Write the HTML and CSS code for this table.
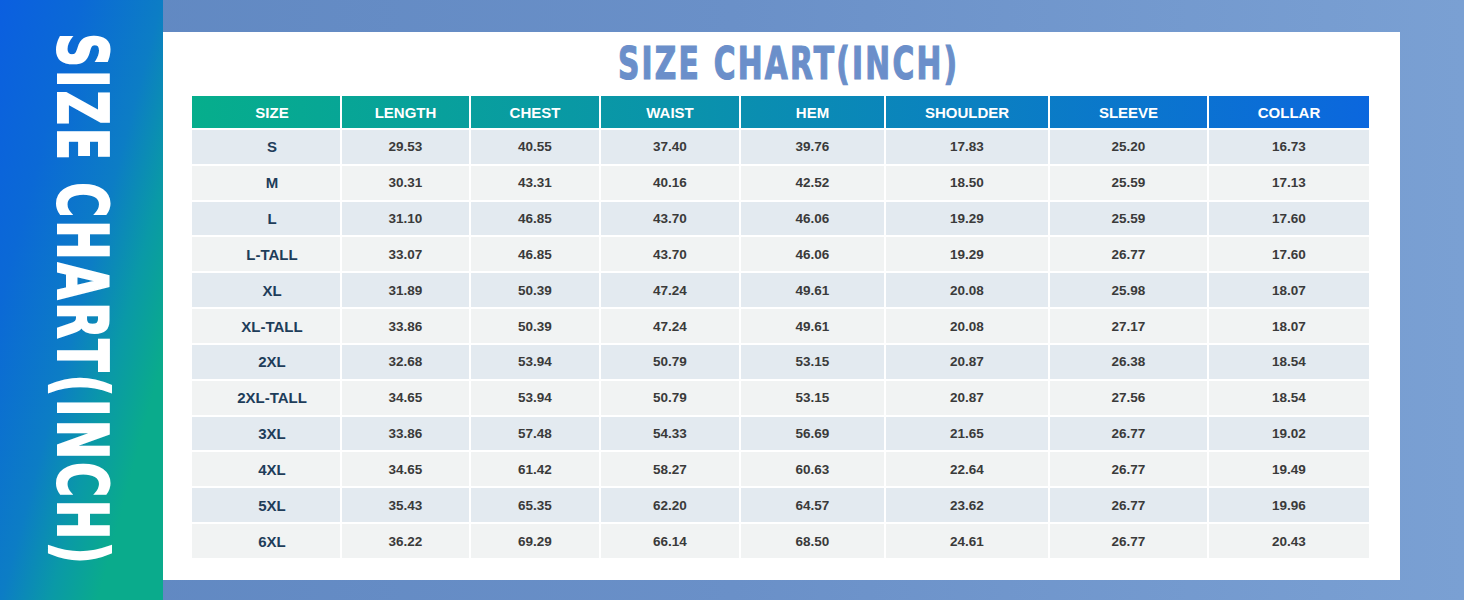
FILE: index.html
```html
<!DOCTYPE html>
<html lang="en">
<head>
<meta charset="utf-8">
<title>Size Chart (Inch)</title>
<link rel="stylesheet" href="styles.css">
</head>
<body>
<aside class="side">
  <span class="side-title">SIZE CHART(INCH)</span>
</aside>
<main class="stage">
  <section class="card">
    <h1 class="title"><span class="title-text">SIZE CHART(INCH)</span></h1>
    <div class="chart">
      <div class="row head">
        <div class="th label">SIZE</div><div class="th">LENGTH</div><div class="th">CHEST</div><div class="th">WAIST</div><div class="th">HEM</div><div class="th">SHOULDER</div><div class="th">SLEEVE</div><div class="th">COLLAR</div>
      </div>
      <div class="row odd">
        <div class="cell label">S</div><div class="cell">29.53</div><div class="cell">40.55</div><div class="cell">37.40</div><div class="cell">39.76</div><div class="cell">17.83</div><div class="cell">25.20</div><div class="cell">16.73</div>
      </div>
      <div class="row even">
        <div class="cell label">M</div><div class="cell">30.31</div><div class="cell">43.31</div><div class="cell">40.16</div><div class="cell">42.52</div><div class="cell">18.50</div><div class="cell">25.59</div><div class="cell">17.13</div>
      </div>
      <div class="row odd">
        <div class="cell label">L</div><div class="cell">31.10</div><div class="cell">46.85</div><div class="cell">43.70</div><div class="cell">46.06</div><div class="cell">19.29</div><div class="cell">25.59</div><div class="cell">17.60</div>
      </div>
      <div class="row even">
        <div class="cell label">L-TALL</div><div class="cell">33.07</div><div class="cell">46.85</div><div class="cell">43.70</div><div class="cell">46.06</div><div class="cell">19.29</div><div class="cell">26.77</div><div class="cell">17.60</div>
      </div>
      <div class="row odd">
        <div class="cell label">XL</div><div class="cell">31.89</div><div class="cell">50.39</div><div class="cell">47.24</div><div class="cell">49.61</div><div class="cell">20.08</div><div class="cell">25.98</div><div class="cell">18.07</div>
      </div>
      <div class="row even">
        <div class="cell label">XL-TALL</div><div class="cell">33.86</div><div class="cell">50.39</div><div class="cell">47.24</div><div class="cell">49.61</div><div class="cell">20.08</div><div class="cell">27.17</div><div class="cell">18.07</div>
      </div>
      <div class="row odd">
        <div class="cell label">2XL</div><div class="cell">32.68</div><div class="cell">53.94</div><div class="cell">50.79</div><div class="cell">53.15</div><div class="cell">20.87</div><div class="cell">26.38</div><div class="cell">18.54</div>
      </div>
      <div class="row even">
        <div class="cell label">2XL-TALL</div><div class="cell">34.65</div><div class="cell">53.94</div><div class="cell">50.79</div><div class="cell">53.15</div><div class="cell">20.87</div><div class="cell">27.56</div><div class="cell">18.54</div>
      </div>
      <div class="row odd">
        <div class="cell label">3XL</div><div class="cell">33.86</div><div class="cell">57.48</div><div class="cell">54.33</div><div class="cell">56.69</div><div class="cell">21.65</div><div class="cell">26.77</div><div class="cell">19.02</div>
      </div>
      <div class="row even">
        <div class="cell label">4XL</div><div class="cell">34.65</div><div class="cell">61.42</div><div class="cell">58.27</div><div class="cell">60.63</div><div class="cell">22.64</div><div class="cell">26.77</div><div class="cell">19.49</div>
      </div>
      <div class="row odd">
        <div class="cell label">5XL</div><div class="cell">35.43</div><div class="cell">65.35</div><div class="cell">62.20</div><div class="cell">64.57</div><div class="cell">23.62</div><div class="cell">26.77</div><div class="cell">19.96</div>
      </div>
      <div class="row even">
        <div class="cell label">6XL</div><div class="cell">36.22</div><div class="cell">69.29</div><div class="cell">66.14</div><div class="cell">68.50</div><div class="cell">24.61</div><div class="cell">26.77</div><div class="cell">20.43</div>
      </div>
    </div>
  </section>
</main>
</body>
</html>
```

FILE: styles.css
```css
* { box-sizing: border-box; }

html, body {
  margin: 0;
  padding: 0;
}

body {
  width: 1464px;
  height: 600px;
  overflow: hidden;
  display: flex;
  font-family: "Liberation Sans", Arial, sans-serif;
  background: linear-gradient(90deg, #5f87c1 0%, #6a90c8 50%, #7aa0d3 100%);
}

.side {
  width: 163px;
  flex: none;
  height: 600px;
  display: flex;
  align-items: center;
  justify-content: center;
  background: linear-gradient(105deg, #0b5fe0 0%, #0b69d6 25%, #0c7dc5 50%, #0a99a7 65%, #0aab8c 80%, #0aab8c 100%);
}

.side-title {
  writing-mode: vertical-rl;
  font-family: "DejaVu Sans Condensed", "DejaVu Sans", sans-serif;
  font-stretch: condensed;
  font-weight: 700;
  font-size: 70px;
  line-height: 1;
  letter-spacing: 4px;
  color: #ffffff;
  -webkit-text-stroke: 2px #ffffff;
  transform: scaleY(0.75);
  white-space: nowrap;
}

.stage {
  flex: 1;
  padding: 32px 64px 20px 0;
  display: flex;
}

.card {
  flex: 1;
  background: #ffffff;
  padding: 0 31px 0 29px;
  display: flex;
  flex-direction: column;
}

.title {
  margin: 0;
  height: 64px;
  padding-left: 16px;
  display: flex;
  align-items: center;
  justify-content: center;
}

.title-text {
  display: inline-block;
  font-family: "DejaVu Sans Condensed", "DejaVu Sans", sans-serif;
  font-stretch: condensed;
  font-weight: 700;
  font-size: 44px;
  line-height: 1;
  letter-spacing: 3px;
  color: #6b8fca;
  -webkit-text-stroke: 1.2px #6b8fca;
  transform: scaleX(0.75);
  white-space: nowrap;
}

.chart {
  display: grid;
  grid-template-columns: 148px 127px 128px 138px 143px 162px 157px 160px;
  grid-template-rows: 32px repeat(12, 1fr);
  gap: 2px;
  height: 462px;
}

.row { display: contents; }

.th,
.cell {
  display: flex;
  align-items: center;
  justify-content: center;
  font-weight: 700;
  white-space: nowrap;
}

.th {
  color: #ffffff;
  font-size: 15px;
  background: linear-gradient(90deg, #06ae8c 192px, #0a93ab 680px, #0b67de 1369px) fixed;
}

.th.label { padding-left: 12px; }

.cell {
  color: #3a3a3a;
  font-size: 13.5px;
}

.cell.label {
  color: #1e3d5a;
  font-size: 15px;
  padding-left: 12px;
}

.odd .cell { background: #e3eaf0; }
.even .cell { background: #f1f3f3; }
```
